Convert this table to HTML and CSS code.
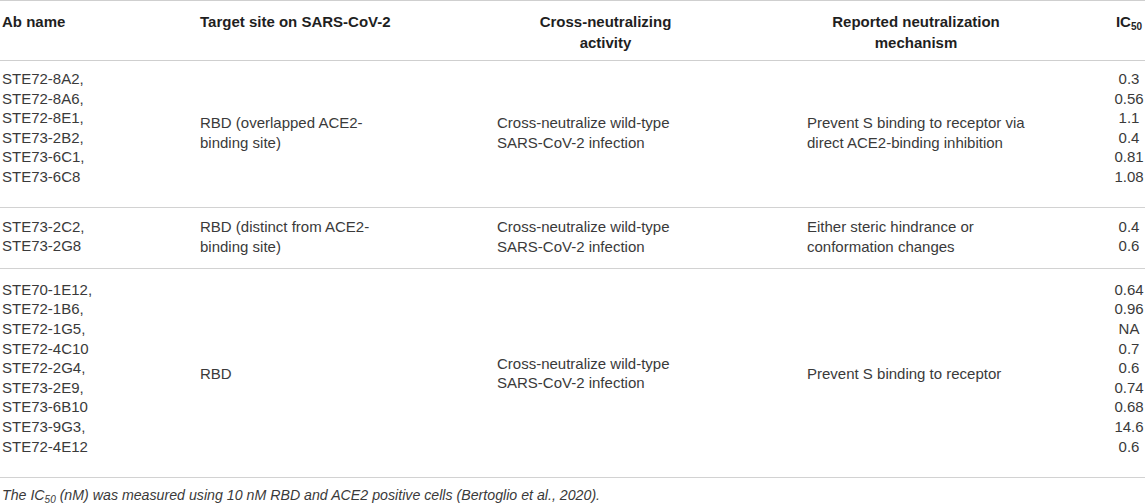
FILE: index.html
```html
<!DOCTYPE html>
<html>
<head>
<meta charset="utf-8">
<link rel="stylesheet" href="styles.css">
</head>
<body>
<table class="tbl">
  <colgroup>
    <col class="w1"><col class="w2"><col class="w3"><col class="w4"><col class="w5">
  </colgroup>
  <thead>
    <tr>
      <th class="c1">Ab name</th>
      <th class="c2">Target site on SARS-CoV-2</th>
      <th class="c3 hc">Cross-neutralizing<br>activity</th>
      <th class="c4 hc">Reported neutralization<br>mechanism</th>
      <th class="c5 hc">IC<sub>50</sub></th>
    </tr>
  </thead>
  <tbody>
    <tr class="r1">
      <td class="c1 list tall">STE72-8A2,<br>STE72-8A6,<br>STE72-8E1,<br>STE73-2B2,<br>STE73-6C1,<br>STE73-6C8</td>
      <td class="c2 mid">RBD (overlapped ACE2-binding site)</td>
      <td class="c3 mid">Cross-neutralize wild-type SARS-CoV-2 infection</td>
      <td class="c4 mid">Prevent S binding to receptor via direct ACE2-binding inhibition</td>
      <td class="c5 list tall num">0.3<br>0.56<br>1.1<br>0.4<br>0.81<br>1.08</td>
    </tr>
    <tr class="r2">
      <td class="c1 list">STE73-2C2,<br>STE73-2G8</td>
      <td class="c2 mid">RBD (distinct from ACE2-binding site)</td>
      <td class="c3 mid">Cross-neutralize wild-type SARS-CoV-2 infection</td>
      <td class="c4 mid">Either steric hindrance or conformation changes</td>
      <td class="c5 list num">0.4<br>0.6</td>
    </tr>
    <tr class="r3">
      <td class="c1 list tall">STE70-1E12,<br>STE72-1B6,<br>STE72-1G5,<br>STE72-4C10<br>STE72-2G4,<br>STE73-2E9,<br>STE73-6B10<br>STE73-9G3,<br>STE72-4E12</td>
      <td class="c2 mid">RBD</td>
      <td class="c3 mid">Cross-neutralize wild-type SARS-CoV-2 infection</td>
      <td class="c4 mid">Prevent S binding to receptor</td>
      <td class="c5 list tall num">0.64<br>0.96<br>NA<br>0.7<br>0.6<br>0.74<br>0.68<br>14.6<br>0.6</td>
    </tr>
  </tbody>
</table>
<p class="note">The IC<sub>50</sub> (nM) was measured using 10 nM RBD and ACE2 positive cells (Bertoglio et al., 2020).</p>
</body>
</html>
```
FILE: styles.css
```css
html, body {
  margin: 0;
  padding: 0;
  background: #ffffff;
}
body {
  font-family: "Liberation Sans", Arial, Helvetica, sans-serif;
  color: #3a3a3a;
  width: 1145px;
  height: 503px;
  overflow: hidden;
}
.tbl {
  width: 1145px;
  border-collapse: collapse;
  table-layout: fixed;
  font-size: 15px;
  line-height: 19.6px;
}
.w1 { width: 190px; }
.w2 { width: 297px; }
.w3 { width: 310px; }
.w4 { width: 238px; }
.w5 { width: 110px; }

thead tr {
  border-top: 1px solid #cfcfcf;
  border-bottom: 1px solid #cfcfcf;
}
th {
  font-weight: bold;
  color: #1f1f1f;
  vertical-align: top;
  text-align: left;
  line-height: 21px;
  padding: 10px 10px 7px 10px;
}
th.hc { text-align: center; }
sub {
  font-size: 10px;
  line-height: 0;
  vertical-align: -3px;
}
tbody tr {
  border-bottom: 1px solid #d2d2d2;
}
td {
  padding: 8px 10px 10px 10px;
  vertical-align: top;
  text-align: left;
}
td.mid { vertical-align: middle; }
td.tall { padding-bottom: 20px; }
.r2 td.list { padding-top: 9px; padding-bottom: 12px; }
.r3 td { padding-top: 11px; }
.r3 td.tall { padding-bottom: 21px; }

.c1 { padding-left: 2px; padding-right: 8px; }
.c2 { padding-left: 10px; padding-right: 77px; }
.c3 { padding-left: 10px; padding-right: 83px; }
.c4 { padding-left: 10px; padding-right: 10px; }
.c5 { padding-left: 78px; padding-right: 0; text-align: center; }
td.num { text-align: center; }

.note {
  margin: 9px 0 0 2px;
  font-size: 14.2px;
  line-height: 16px;
  font-style: italic;
  color: #3a3a3a;
}
.note sub {
  font-size: 10px;
  vertical-align: -3px;
}
```
